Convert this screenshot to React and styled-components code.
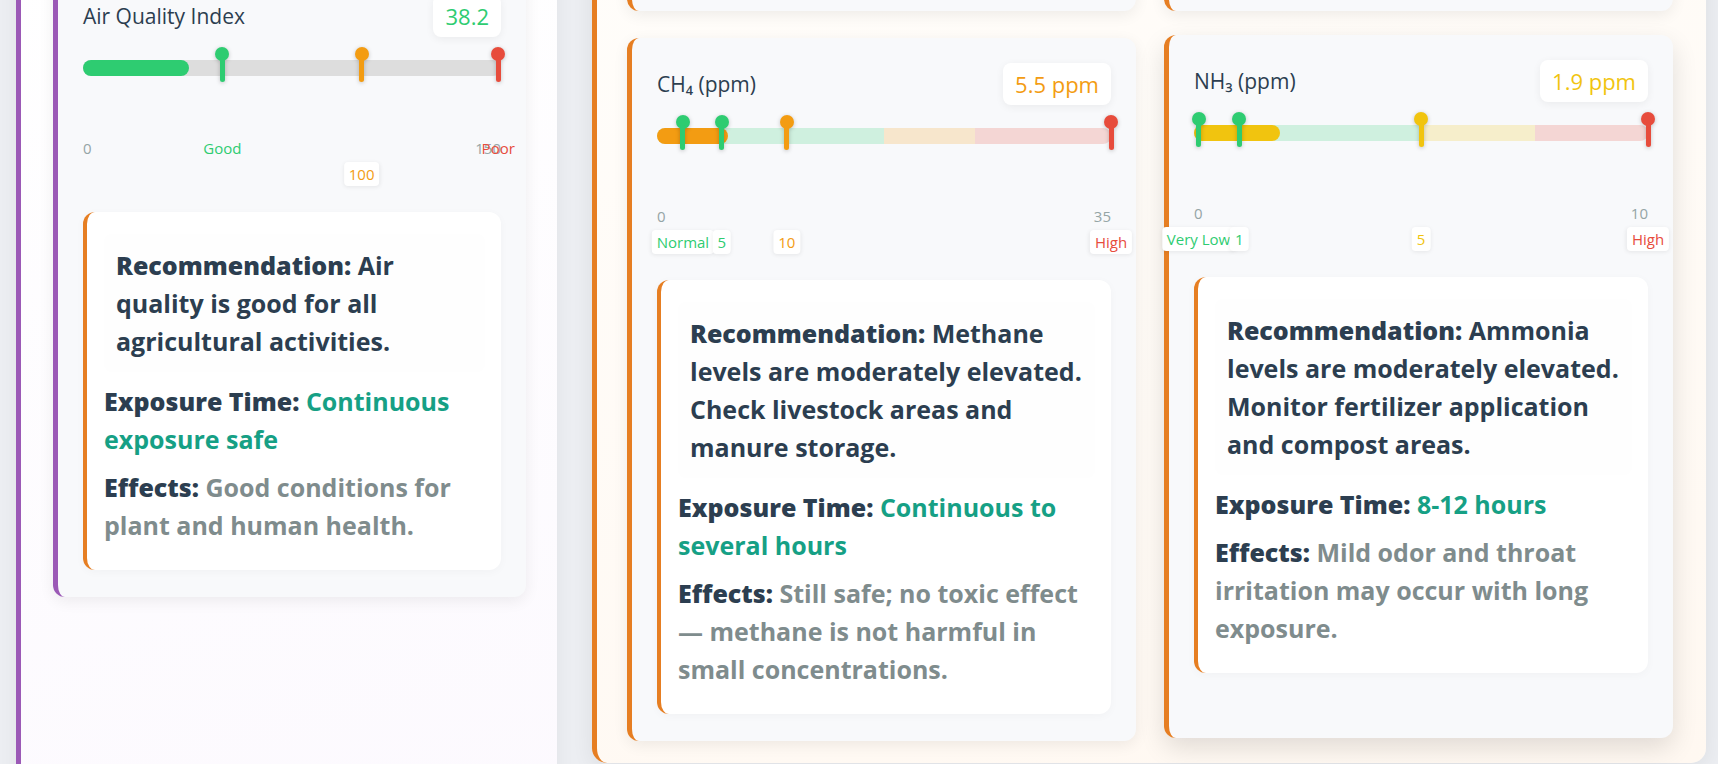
import React from "react";
import styled, { createGlobalStyle } from "styled-components";

const GlobalStyle = createGlobalStyle`
  * { box-sizing: border-box; }
  html, body {
    margin: 0;
    padding: 0;
  }
  body {
    background: #eceef2;
    font-family: "Open Sans", "Noto Sans", "DejaVu Sans", sans-serif;
    color: #2c3e50;
    overflow: hidden;
  }
`;

const GREEN = "#2ecc71";
const ORANGE = "#f39c12";
const YELLOW = "#f1c40f";
const RED = "#e74c3c";

const airQuality = {
  title: "Air Quality Index",
  display: "38.2",
  value: 38.2,
  max: 150,
  color: GREEN,
  accent: "#9b59b6",
  segments: [{ w: 100, c: "#dddddd" }],
  markers: [
    { at: 50, color: GREEN, label: "Good", inline: true },
    { at: 100, color: ORANGE, label: "100" },
    { at: 149, color: RED, label: "Poor", inline: true },
  ],
  recommendation: "Air quality is good for all agricultural activities.",
  exposure: "Continuous exposure safe",
  effects: "Good conditions for plant and human health.",
};

const gases = [
  {
    title: "CH₄ (ppm)",
    display: "5.5 ppm",
    value: 5.5,
    max: 35,
    color: ORANGE,
    accent: "#e67e22",
    segments: [
      { w: 50, c: "rgba(46, 204, 113, 0.2)" },
      { w: 20, c: "rgba(243, 156, 18, 0.2)" },
      { w: 30, c: "rgba(231, 76, 60, 0.2)" },
    ],
    markers: [
      { at: 2, color: GREEN, label: "Normal" },
      { at: 5, color: GREEN, label: "5" },
      { at: 10, color: ORANGE, label: "10" },
      { at: 35, color: RED, label: "High" },
    ],
    recommendation:
      "Methane levels are moderately elevated. Check livestock areas and manure storage.",
    exposure: "Continuous to several hours",
    effects: "Still safe; no toxic effect — methane is not harmful in small concentrations.",
  },
  {
    title: "NH₃ (ppm)",
    display: "1.9 ppm",
    value: 1.9,
    max: 10,
    color: YELLOW,
    accent: "#e67e22",
    lifted: true,
    segments: [
      { w: 50, c: "rgba(46, 204, 113, 0.2)" },
      { w: 25, c: "rgba(241, 196, 15, 0.2)" },
      { w: 25, c: "rgba(231, 76, 60, 0.2)" },
    ],
    markers: [
      { at: 0.1, color: GREEN, label: "Very Low" },
      { at: 1, color: GREEN, label: "1" },
      { at: 5, color: YELLOW, label: "5" },
      { at: 10, color: RED, label: "High" },
    ],
    recommendation:
      "Ammonia levels are moderately elevated. Monitor fertilizer application and compost areas.",
    exposure: "8-12 hours",
    effects: "Mild odor and throat irritation may occur with long exposure.",
  },
];

const pct = (v, max) => (v / max) * 100;

const Gauge = ({ data }) => {
  const boxed = data.markers.filter((m) => !m.inline);
  const inline = data.markers.filter((m) => m.inline);

  return (
    <Card accent={data.accent} lifted={data.lifted}>
      <Header>
        <Title>{data.title}</Title>
        <ValueBadge color={data.color}>{data.display}</ValueBadge>
      </Header>

      <TrackWrap>
        <Track>
          {data.segments.map((s, i) => (
            <Segment key={i} w={s.w} c={s.c} />
          ))}
        </Track>
        <Fill color={data.color} style={{ width: pct(data.value, data.max) + "%" }} />
        {data.markers.map((m, i) => (
          <Marker key={i} color={m.color} style={{ left: pct(m.at, data.max) + "%" }} />
        ))}
      </TrackWrap>

      <ScaleRow>
        <span>0</span>
        {inline.map((m, i) => (
          <InlineTag key={i} color={m.color} style={{ left: pct(m.at, data.max) + "%" }}>
            {m.label}
          </InlineTag>
        ))}
        <span>{data.max}</span>
      </ScaleRow>

      <TagRow>
        {boxed.map((m, i) => (
          <Tag key={i} color={m.color} style={{ left: pct(m.at, data.max) + "%" }}>
            {m.label}
          </Tag>
        ))}
      </TagRow>

      <Advice>
        <AdviceLead>
          <Strong>Recommendation:</Strong> {data.recommendation}
        </AdviceLead>
        <AdviceLine>
          <Strong>Exposure Time:</Strong> <Exposure>{data.exposure}</Exposure>
        </AdviceLine>
        <AdviceLine>
          <Strong>Effects:</Strong> <Effects>{data.effects}</Effects>
        </AdviceLine>
      </Advice>
    </Card>
  );
};

const App = () => {
  return (
    <>
      <GlobalStyle />
      <Page>
        <Sidebar>
          <Gauge data={airQuality} />
        </Sidebar>
        <Board>
          <CardStub accent="#e67e22" />
          <CardStub accent="#e67e22" />
          {gases.map((g) => (
            <Gauge key={g.title} data={g} />
          ))}
        </Board>
      </Page>
    </>
  );
};

const Page = styled.main`
  display: grid;
  grid-template-columns: 541px 1114px;
  column-gap: 35px;
  align-items: start;
  padding-left: 16px;
  margin-top: -60px;
`;

const Sidebar = styled.aside`
  min-height: 920px;
  background: linear-gradient(165deg, #ffffff 0%, #fcf9fe 100%);
  border-left: 5px solid #9b59b6;
  border-radius: 15px;
  padding: 30px 31px 0 32px;
  box-shadow: 0 5px 20px rgba(0, 0, 0, 0.05);
`;

const Board = styled.section`
  display: grid;
  grid-template-columns: 1fr 1fr;
  column-gap: 28px;
  row-gap: 27px;
  background: linear-gradient(165deg, #fffdfa 0%, #fff8f1 100%);
  border-left: 5px solid #e67e22;
  border-radius: 15px;
  padding: 0 33px 22px 30px;
  box-shadow: 0 5px 22px rgba(0, 0, 0, 0.07);
`;

const Card = styled.div`
  background: #f8f9fb;
  border-left: 5px solid ${(p) => p.accent};
  border-radius: 12px;
  padding: 25px 25px 27px;
  box-shadow: ${(p) =>
    p.lifted ? "0 10px 26px rgba(0, 0, 0, 0.12)" : "0 4px 15px rgba(0, 0, 0, 0.07)"};
  transform: ${(p) => (p.lifted ? "translateY(-3px)" : "none")};
`;

const CardStub = styled(Card)`
  height: 71px;
`;

const Header = styled.div`
  display: flex;
  justify-content: space-between;
  align-items: center;
  margin-bottom: 23px;
`;

const Title = styled.div`
  font-size: 21px;
  font-weight: 500;
  color: #2c3e50;
`;

const ValueBadge = styled.div`
  background: #ffffff;
  border-radius: 8px;
  padding: 6px 12px;
  font-size: 22px;
  line-height: 30px;
  font-weight: 500;
  color: ${(p) => p.color};
  box-shadow: 0 2px 8px rgba(0, 0, 0, 0.06);
`;

const TrackWrap = styled.div`
  position: relative;
  height: 16px;
`;

const Track = styled.div`
  display: flex;
  height: 100%;
  border-radius: 8px;
  overflow: hidden;
`;

const Segment = styled.div`
  flex: 0 0 ${(p) => p.w}%;
  background: ${(p) => p.c};
`;

const Fill = styled.div`
  position: absolute;
  left: 0;
  top: 0;
  bottom: 0;
  border-radius: 8px;
  background: ${(p) => p.color};
`;

const Marker = styled.div`
  position: absolute;
  top: -13px;
  width: 14px;
  height: 35px;
  margin-left: -7px;
  filter: drop-shadow(0 1px 2px rgba(0, 0, 0, 0.22));

  &::before {
    content: "";
    position: absolute;
    left: 0;
    top: 0;
    width: 14px;
    height: 14px;
    border-radius: 50%;
    background: ${(p) => p.color};
  }

  &::after {
    content: "";
    position: absolute;
    left: 4.5px;
    top: 10px;
    width: 5px;
    height: 25px;
    border-radius: 3px;
    background: ${(p) => p.color};
  }
`;

const ScaleRow = styled.div`
  position: relative;
  display: flex;
  justify-content: space-between;
  margin-top: 62px;
  font-size: 15px;
  line-height: 20px;
  color: #95a5a6;
`;

const InlineTag = styled.span`
  position: absolute;
  top: 0;
  transform: translateX(-50%);
  color: ${(p) => p.color};
  white-space: nowrap;
`;

const TagRow = styled.div`
  position: relative;
  height: 25px;
  margin-top: 4px;
`;

const Tag = styled.span`
  position: absolute;
  top: 0;
  transform: translateX(-50%);
  background: #ffffff;
  border-radius: 4px;
  padding: 2px 5px;
  font-size: 15px;
  line-height: 20px;
  color: ${(p) => p.color};
  white-space: nowrap;
  box-shadow: 0 1px 4px rgba(0, 0, 0, 0.08);
`;

const Advice = styled.div`
  margin-top: 25px;
  background: #ffffff;
  border-left: 4px solid #e67e22;
  border-radius: 12px;
  padding: 22px 16px 16px 17px;
  font-size: 25px;
  line-height: 38px;
  font-weight: 700;
  color: #2c3e50;
  box-shadow: 0 2px 10px rgba(0, 0, 0, 0.03);
`;

const AdviceLead = styled.p`
  margin: 0 0 10px;
  padding: 12px;
  border-radius: 8px;
  background: #fefefe;
`;

const AdviceLine = styled.p`
  margin: 0 0 10px;
`;

const Strong = styled.strong`
  font-weight: 800;
`;

const Exposure = styled.span`
  color: #16a085;
`;

const Effects = styled.span`
  color: #7f8c8d;
`;

export default App;
